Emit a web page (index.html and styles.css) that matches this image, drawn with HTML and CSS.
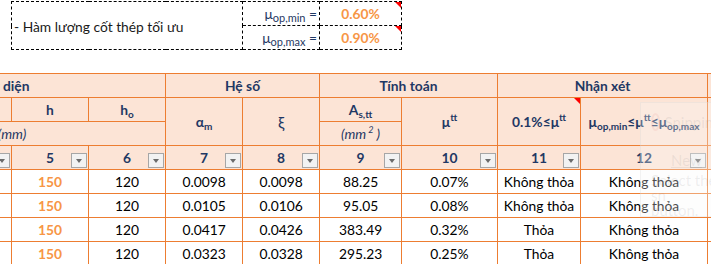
FILE: index.html
```html
<!DOCTYPE html>
<html lang="vi">
<head>
<meta charset="utf-8">
<title>Hàm lượng cốt thép</title>
<link rel="stylesheet" href="styles.css">
</head>
<body>
<div class="sheet">
<table class="grid">
  <colgroup>
    <col class="c-a"><col class="c-b"><col class="c-h"><col class="c-ho"><col class="c-am"><col class="c-xi"><col class="c-as"><col class="c-mu"><col class="c-n1"><col class="c-n2"><col class="c-x">
  </colgroup>
  <tbody>
    <tr class="r">
      <td colspan="2"></td>
      <td colspan="3" rowspan="2" class="box box-label">- Hàm lượng cốt thép tối ưu</td>
      <td class="box box-eq">μ<sub>op,min</sub> =</td>
      <td class="box box-val flag">0.60%</td>
      <td colspan="4"></td>
    </tr>
    <tr class="r">
      <td colspan="2"></td>
      <td class="box box-eq">μ<sub>op,max</sub> =</td>
      <td class="box box-val flag">0.90%</td>
      <td colspan="4"></td>
    </tr>
    <tr class="r"><td colspan="11"></td></tr>
    <tr class="r hd">
      <td colspan="4" class="shift">Tiết diện</td>
      <td colspan="2">Hệ số</td>
      <td colspan="2">Tính toán</td>
      <td colspan="2">Nhận xét</td>
      <td></td>
    </tr>
    <tr class="r hd">
      <td>STT</td>
      <td>b</td>
      <td>h</td>
      <td>h<sub>o</sub></td>
      <td rowspan="2">α<sub>m</sub></td>
      <td rowspan="2" class="xi">ξ</td>
      <td>A<sub>s,tt</sub></td>
      <td rowspan="2">μ<sup>tt</sup></td>
      <td rowspan="2" class="flag">0.1%≤μ<sup>tt</sup></td>
      <td rowspan="2">μ<sub>op,min</sub>≤μ<sup>tt</sup>≤μ<sub>op,max</sub></td>
      <td rowspan="2"></td>
    </tr>
    <tr class="r hd">
      <td colspan="4" class="unit">(mm)</td>
      <td class="unit">(mm<sup>2</sup>)</td>
    </tr>
    <tr class="r hd flt">
      <td>3<span class="dd"></span></td>
      <td>4<span class="dd"></span></td>
      <td>5<span class="dd"></span></td>
      <td>6<span class="dd"></span></td>
      <td>7<span class="dd"></span></td>
      <td>8<span class="dd"></span></td>
      <td>9<span class="dd"></span></td>
      <td>10<span class="dd"></span></td>
      <td>11<span class="dd"></span></td>
      <td>12<span class="dd"></span></td>
      <td></td>
    </tr>
    <tr class="r dt">
      <td>1</td><td>200</td><td class="or">150</td><td>120</td><td>0.0098</td><td>0.0098</td><td>88.25</td><td>0.07%</td><td>Không thỏa</td><td>Không thỏa</td><td class="nb"></td>
    </tr>
    <tr class="r dt">
      <td>2</td><td>200</td><td class="or">150</td><td>120</td><td>0.0105</td><td>0.0106</td><td>95.05</td><td>0.08%</td><td>Không thỏa</td><td>Không thỏa</td><td class="nb"></td>
    </tr>
    <tr class="r dt">
      <td>3</td><td>200</td><td class="or">150</td><td>120</td><td>0.0417</td><td>0.0426</td><td>383.49</td><td>0.32%</td><td>Thỏa</td><td>Không thỏa</td><td class="nb"></td>
    </tr>
    <tr class="r dt">
      <td>4</td><td>200</td><td class="or">150</td><td>120</td><td>0.0323</td><td>0.0328</td><td>295.23</td><td>0.25%</td><td>Thỏa</td><td>Không thỏa</td><td class="nb"></td>
    </tr>
  </tbody>
</table>
<div class="ghost">
  <div class="ghost-title"><span class="ghost-ico"></span>Snipping</div>
  <div class="ghost-new">New</div>
  <div class="ghost-text">Select the sn<br>button.</div>
</div>
</div>
</body>
</html>
```

FILE: styles.css
```css
html, body {
  margin: 0;
  padding: 0;
  background: #ffffff;
  overflow: hidden;
}
.sheet {
  position: relative;
  width: 711px;
  height: 264px;
  overflow: hidden;
  font-family: Lato, "Noto Sans", "DejaVu Sans", sans-serif;
  font-size: 13.8px;
  color: #000;
}
.grid {
  border-collapse: collapse;
  table-layout: fixed;
  margin-left: -142px;
  margin-top: 1px;
  width: 913px;
}
.c-a { width: 76px; }
.c-b { width: 77px; }
.c-h { width: 77px; }
.c-ho { width: 77px; }
.c-am { width: 77px; }
.c-xi { width: 77px; }
.c-as { width: 82px; }
.c-mu { width: 96px; }
.c-n1 { width: 83px; }
.c-n2 { width: 127px; }
.c-x { width: 64px; }

.grid td {
  height: 23px;
  padding: 0;
  text-align: center;
  vertical-align: middle;
  white-space: nowrap;
  overflow: hidden;
  line-height: 18px;
}
.r { height: 24px; }

/* top info box */
.box {
  border: 1px dashed #000;
}
.box-label {
  text-align: left !important;
  padding-left: 2px !important;
  padding-top: 2px !important;
  color: #1a1a1a;
}
.box-eq {
  text-align: right !important;
  padding-right: 2px !important;
  color: #1F3864;
}
.box-eq sub {
  font-size: 11px;
  vertical-align: -3px;
  line-height: 0;
}
.box-val {
  color: #F79646;
  font-weight: 700;
}
.flag { position: relative; }
.flag::after {
  content: "";
  position: absolute;
  top: 0;
  right: 0;
  border-style: solid;
  border-width: 0 6px 6px 0;
  border-color: transparent #FF0000 transparent transparent;
}

/* header */
.hd td {
  background: #FCE4D6;
  border: 1px solid #ED7D31;
  color: #1F3864;
  font-weight: 700;
}
.hd sub, .hd sup {
  font-size: 10px;
  line-height: 0;
}
.hd sub { vertical-align: -3px; }
.hd sup { vertical-align: 6px; }
.shift { padding-right: 19px !important; }
.unit {
  font-style: italic;
  font-weight: 400 !important;
}
.unit sup { font-size: 9px; padding: 0 3px 0 2px; }
.xi { font-weight: 400 !important; font-size: 16px; }

/* filter row */
.flt td { position: relative; }
.dd {
  position: absolute;
  right: 1px;
  bottom: 1px;
  width: 14px;
  height: 13px;
  border: 1px solid #A6A6A6;
  background: #F2F2F2;
}
.dd::after {
  content: "";
  position: absolute;
  left: 4px;
  top: 5px;
  border-style: solid;
  border-width: 4px 3px 0 3px;
  border-color: #6b6b6b transparent transparent transparent;
}

/* data */
.dt td {
  border: 1px solid #ED7D31;
  background: #fff;
  font-weight: 400;
}
.dt td.nb { border-right: none; }
.dt .or {
  color: #F79646;
  font-weight: 700;
}

/* faint snipping tool overlay */
.ghost {
  position: absolute;
  left: 640px;
  top: 102px;
  width: 80px;
  height: 113px;
  background: rgba(250, 250, 250, 0.3);
  border: 1px solid rgba(200, 200, 200, 0.2);
  color: rgba(120, 120, 120, 0.12);
  font-size: 15px;
}
.ghost-title {
  display: flex;
  align-items: center;
  gap: 4px;
  margin: 10px 0 0 10px;
}
.ghost-ico {
  width: 14px;
  height: 14px;
  border: 2px solid rgba(230, 120, 120, 0.12);
  border-radius: 50%;
}
.ghost-new {
  margin: 20px 0 0 30px;
  text-decoration: underline;
}
.ghost-text {
  margin: 4px 0 0 10px;
  line-height: 15px;
}
```
